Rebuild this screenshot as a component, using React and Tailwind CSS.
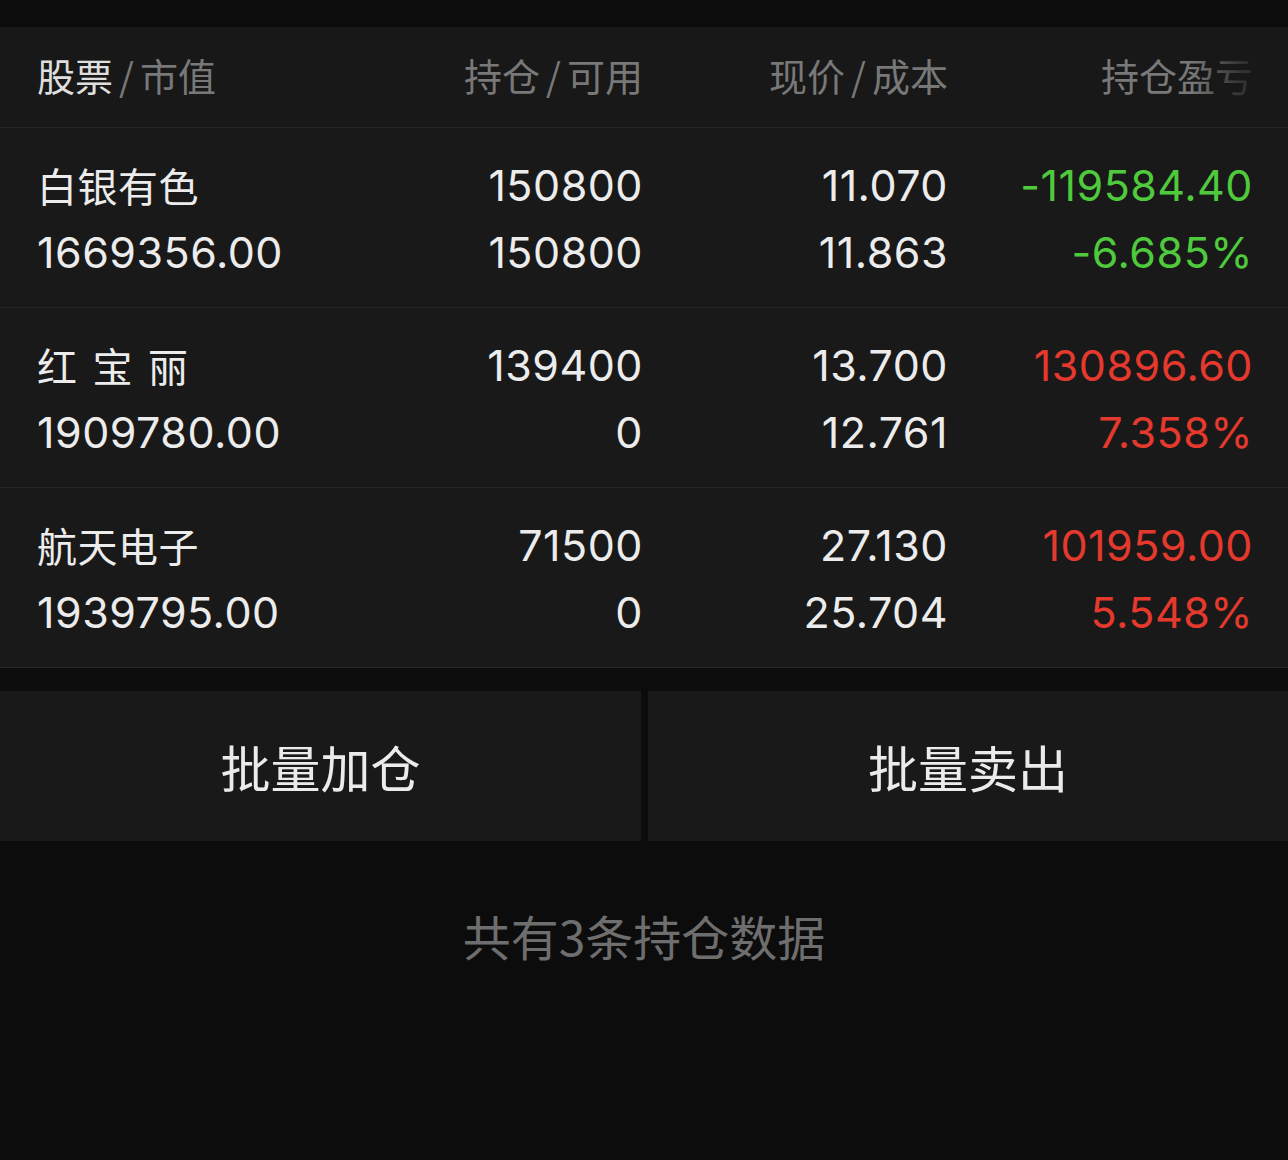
import React from "react";

const CJK = { fontFamily: '"PingFang SC", "Noto Sans CJK SC", sans-serif' };
const NUM = { fontFamily: 'Inter, "Noto Sans CJK SC", sans-serif' };

const rows = [
  { name: "白银有色", spaced: false, mv: "1669356.00", pos: "150800", avail: "150800", price: "11.070", cost: "11.863", pl: "-119584.40", pct: "-6.685%", up: false },
  { name: "红宝丽", spaced: true, mv: "1909780.00", pos: "139400", avail: "0", price: "13.700", cost: "12.761", pl: "130896.60", pct: "7.358%", up: true },
  { name: "航天电子", spaced: false, mv: "1939795.00", pos: "71500", avail: "0", price: "27.130", cost: "25.704", pl: "101959.00", pct: "5.548%", up: true },
];

function Header() {
  return (
    <div className="relative flex h-[101px] items-center border-b border-[#242424] bg-[#181818] pb-[5px] pl-[37px] text-[38px] text-[#787878]" style={CJK}>
      <div className="w-[302px]">
        <span className="text-[#dedede]">股票</span>
        <span className="mx-[6px]">/</span>
        <span>市值</span>
      </div>
      <div className="w-[304px] text-right">持仓<span className="mx-[6px]">/</span>可用</div>
      <div className="w-[305px] text-right">现价<span className="mx-[6px]">/</span>成本</div>
      <div className="w-[305px] text-right">持仓盈亏</div>
      <div className="pointer-events-none absolute right-0 top-0 h-full w-[96px] bg-gradient-to-r from-transparent via-[#181818]/70 to-[#181818]" />
    </div>
  );
}

function Row({ r }) {
  const c = r.up ? "text-[#e5392e]" : "text-[#4fca3c]";
  return (
    <div className="flex h-[180px] border-b border-[#252525] bg-[#191919] pl-[37px] pt-[24px] text-[43px] leading-[67px] tracking-[0.5px] text-[#ececec]">
      <div className="w-[302px]">
        <div className={r.spaced ? "text-[40px] tracking-[15.5px]" : "text-[40px] tracking-[0.5px]"} style={CJK}>{r.name}</div>
        <div style={NUM}>{r.mv}</div>
      </div>
      <div className="w-[304px] text-right" style={NUM}>
        <div>{r.pos}</div>
        <div>{r.avail}</div>
      </div>
      <div className="w-[305px] text-right" style={NUM}>
        <div>{r.price}</div>
        <div>{r.cost}</div>
      </div>
      <div className={`w-[305px] text-right ${c}`} style={NUM}>
        <div>{r.pl}</div>
        <div>{r.pct}</div>
      </div>
    </div>
  );
}

export default function App() {
  return (
    <div className="min-h-[1160px] w-[1288px] bg-[#0c0c0c]">
      <div className="h-[27px]" />
      <Header />
      {rows.map((r) => (
        <Row key={r.name} r={r} />
      ))}
      <div className="mt-[23px] flex h-[150px] gap-[7px]">
        <div className="flex w-[641px] items-center justify-center bg-[#191919] text-[50px] text-[#ebebeb]" style={CJK}>批量加仓</div>
        <div className="flex flex-1 items-center justify-center bg-[#191919] text-[50px] text-[#ebebeb]" style={CJK}>批量卖出</div>
      </div>
      <div className="mt-[58px] text-center text-[48px] text-[#6e6e6e]" style={CJK}>共有3条持仓数据</div>
    </div>
  );
}
